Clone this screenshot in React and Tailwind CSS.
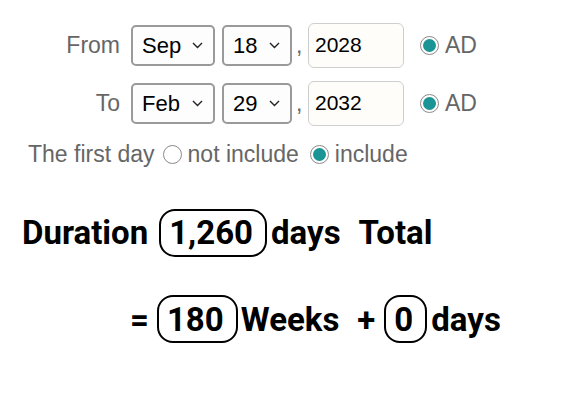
import React from 'react'

const label = "font-['Liberation_Sans',Arial,sans-serif] text-[23px] text-[#666]"

function Chevron() {
  return (
    <svg width="11" height="7" viewBox="0 0 11 7" className="ml-auto">
      <path d="M1 1l4.5 4.5L10 1" fill="none" stroke="#222" strokeWidth="1.4" />
    </svg>
  )
}

function Select({ value, w }) {
  return (
    <div
      className={`${w} h-[41px] flex items-center pl-[9px] pr-[10px] border-2 border-[#9a9a9a] rounded-[5px] bg-[#fdfdfd] font-['Liberation_Sans',Arial,sans-serif] text-[22px] text-black`}
    >
      <span>{value}</span>
      <Chevron />
    </div>
  )
}

function Radio({ checked }) {
  return (
    <span className="w-[19px] h-[19px] rounded-full border border-[#8a8a8a] bg-white flex items-center justify-center shrink-0">
      {checked && <span className="w-[13px] h-[13px] rounded-full bg-[#1a9494]" />}
    </span>
  )
}

function DateRow({ name, month, day, year }) {
  return (
    <div className="flex items-center h-[46px]">
      <span className={`${label} w-[120px] text-right`}>{name}</span>
      <div className="ml-[11px]">
        <Select value={month} w="w-[84px]" />
      </div>
      <div className="ml-[7px]">
        <Select value={day} w="w-[70px]" />
      </div>
      <span className={`${label} ml-[4px] w-[12px]`}>,</span>
      <div className="w-[96px] h-[45px] flex items-center pl-[6px] border border-[#cfcfcf] rounded-[6px] bg-[#fffdf9] font-['Liberation_Sans',Arial,sans-serif] text-[21px] text-black">
        {year}
      </div>
      <div className="flex items-center ml-[16px] gap-[6px]">
        <Radio checked />
        <span className={label}>AD</span>
      </div>
    </div>
  )
}

function Pill({ children }) {
  return (
    <span className="inline-flex items-center h-[48px] pl-[8px] pr-[12px] border-2 border-black rounded-[16px] leading-none">
      {children}
    </span>
  )
}

export default function App() {
  return (
    <div className="w-[579px] h-[402px] bg-white overflow-hidden">
      <div className="pt-[22px] flex flex-col gap-[12px]">
        <DateRow name="From" month="Sep" day="18" year="2028" />
        <DateRow name="To" month="Feb" day="29" year="2032" />
      </div>

      <div className="flex items-center mt-[16px] ml-[28px] h-[24px]">
        <span className={label}>The first day</span>
        <span className="ml-[8px]"><Radio /></span>
        <span className={`${label} ml-[6px]`}>not include</span>
        <span className="ml-[11px]"><Radio checked /></span>
        <span className={`${label} ml-[6px]`}>include</span>
      </div>

      <div className="font-['Roboto',sans-serif] font-bold text-black text-[33px]">
        <div className="flex items-center mt-[42px] ml-[22px]">
          <span>Duration</span>
          <span className="ml-[11px]"><Pill>1,260</Pill></span>
          <span className="ml-[4px]">days</span>
          <span className="ml-[18px]">Total</span>
        </div>

        <div className="flex items-center mt-[37px] ml-[130px]">
          <span>=</span>
          <span className="ml-[8px]"><Pill>180</Pill></span>
          <span className="ml-[3px]">Weeks</span>
          <span className="ml-[18px]">+</span>
          <span className="ml-[9px]"><Pill>0</Pill></span>
          <span className="ml-[4px]">days</span>
        </div>
      </div>
    </div>
  )
}
